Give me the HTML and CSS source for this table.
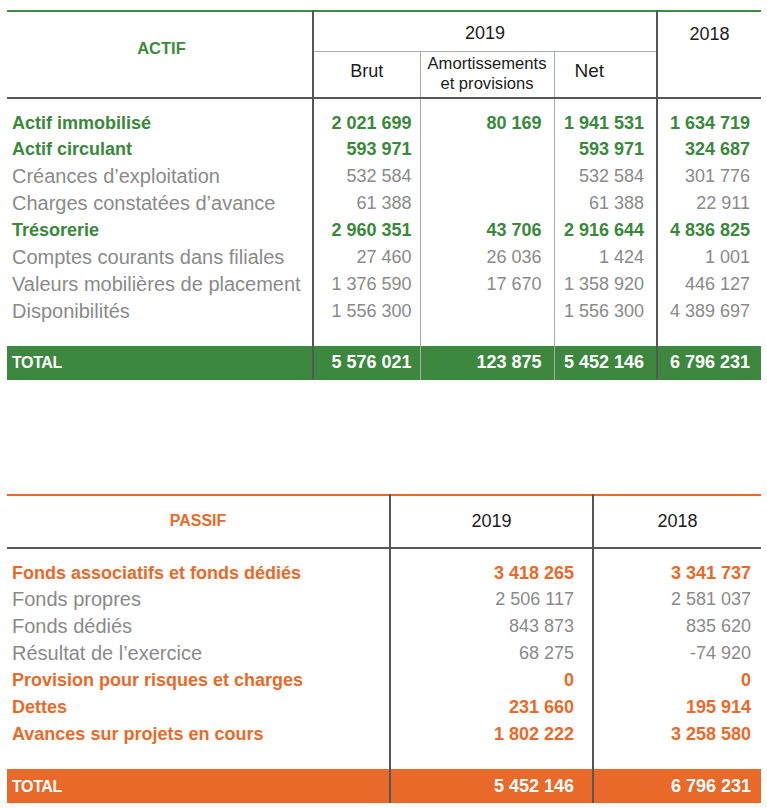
FILE: index.html
```html
<!DOCTYPE html>
<html lang="fr">
<head>
<meta charset="utf-8">
<title>Bilan</title>
<link rel="stylesheet" href="styles.css">
</head>
<body>
<div class="page">
  <table class="bilan actif">
    <colgroup>
      <col class="c-label"><col class="c-brut"><col class="c-amort"><col class="c-net"><col class="c-prev">
    </colgroup>
    <thead>
      <tr class="h1">
        <th rowspan="2" class="title">ACTIF</th>
        <th colspan="3" class="year y2019">2019</th>
        <th rowspan="2" class="year y2018">2018</th>
      </tr>
      <tr class="h2">
        <th class="subh brut">Brut</th>
        <th class="subh amort">Amortissements<br>et provisions</th>
        <th class="subh net">Net</th>
      </tr>
    </thead>
    <tbody>
      <tr class="gap top"><td></td><td></td><td></td><td></td><td></td></tr>
      <tr class="grp"><td>Actif immobilisé</td><td>2 021 699</td><td>80 169</td><td>1 941 531</td><td>1 634 719</td></tr>
      <tr class="grp"><td>Actif circulant</td><td>593 971</td><td></td><td>593 971</td><td>324 687</td></tr>
      <tr class="item"><td>Créances d’exploitation</td><td>532 584</td><td></td><td>532 584</td><td>301 776</td></tr>
      <tr class="item"><td>Charges constatées d’avance</td><td>61 388</td><td></td><td>61 388</td><td>22 911</td></tr>
      <tr class="grp"><td>Trésorerie</td><td>2 960 351</td><td>43 706</td><td>2 916 644</td><td>4 836 825</td></tr>
      <tr class="item"><td>Comptes courants dans filiales</td><td>27 460</td><td>26 036</td><td>1 424</td><td>1 001</td></tr>
      <tr class="item"><td>Valeurs mobilières de placement</td><td>1 376 590</td><td>17 670</td><td>1 358 920</td><td>446 127</td></tr>
      <tr class="item"><td>Disponibilités</td><td>1 556 300</td><td></td><td>1 556 300</td><td>4 389 697</td></tr>
      <tr class="gap bottom"><td></td><td></td><td></td><td></td><td></td></tr>
    </tbody>
    <tfoot>
      <tr class="total"><td>TOTAL</td><td>5 576 021</td><td>123 875</td><td>5 452 146</td><td>6 796 231</td></tr>
    </tfoot>
  </table>

  <table class="bilan passif">
    <colgroup>
      <col class="p-label"><col class="p-cur"><col class="p-prev">
    </colgroup>
    <thead>
      <tr class="ph">
        <th class="title">PASSIF</th>
        <th class="year">2019</th>
        <th class="year">2018</th>
      </tr>
    </thead>
    <tbody>
      <tr class="gap top"><td></td><td></td><td></td></tr>
      <tr class="grp"><td>Fonds associatifs et fonds dédiés</td><td>3 418 265</td><td>3 341 737</td></tr>
      <tr class="item"><td>Fonds propres</td><td>2 506 117</td><td>2 581 037</td></tr>
      <tr class="item"><td>Fonds dédiés</td><td>843 873</td><td>835 620</td></tr>
      <tr class="item"><td>Résultat de l’exercice</td><td>68 275</td><td>-74 920</td></tr>
      <tr class="grp"><td>Provision pour risques et charges</td><td>0</td><td>0</td></tr>
      <tr class="grp"><td>Dettes</td><td>231 660</td><td>195 914</td></tr>
      <tr class="grp"><td>Avances sur projets en cours</td><td>1 802 222</td><td>3 258 580</td></tr>
      <tr class="gap bottom"><td></td><td></td><td></td></tr>
    </tbody>
    <tfoot>
      <tr class="total"><td>TOTAL</td><td>5 452 146</td><td>6 796 231</td></tr>
    </tfoot>
  </table>
</div>
</body>
</html>
```

FILE: styles.css
```css
* { box-sizing: border-box; }

html, body {
  margin: 0;
  padding: 0;
  background: #ffffff;
}

body {
  font-family: "Liberation Sans", Arial, sans-serif;
  color: #1c1c1c;
}

.page {
  padding: 10px 6px 0 7px;
}

.bilan {
  width: 754px;
  border-collapse: collapse;
  table-layout: fixed;
}

.bilan th,
.bilan td {
  padding: 0;
}

/* ---------- ACTIF ---------- */
.actif {
  border-top: 2px solid #3e8a40;
}

.c-label { width: 306px; }
.c-brut  { width: 107px; }
.c-amort { width: 134px; }
.c-net   { width: 103px; }
.c-prev  { width: 104px; }

.actif thead th {
  font-weight: normal;
  vertical-align: top;
  border-bottom: 2px solid #575757;
}

.actif .h1 { height: 40px; }
.actif .h2 { height: 47px; }

.actif .title {
  color: #3e8a40;
  font-weight: bold;
  font-size: 16.5px;
  line-height: 20px;
  padding-top: 26px;
  padding-left: 4px;
  text-align: center;
  border-right: 2px solid #575757;
}

.actif .year {
  font-size: 18px;
  line-height: 22px;
  text-align: center;
}

.actif .y2019 {
  padding-top: 10px;
  border-right: 2px solid #575757;
  border-bottom: 1px solid #ababab;
}

.actif .y2018 {
  padding-top: 11px;
}

.actif .subh {
  font-size: 18px;
  line-height: 20px;
  padding-top: 9px;
  text-align: center;
}

.actif .brut,
.actif .amort {
  border-right: 1px solid #ababab;
}

.actif .amort {
  font-size: 16.6px;
  line-height: 20px;
  padding-top: 2px;
}

.actif .net {
  text-align: left;
  padding-left: 20px;
  font-size: 19px;
  border-right: 2px solid #575757;
}

.actif td:nth-child(1),
.actif td:nth-child(4) {
  border-right: 2px solid #575757;
}

.actif td:nth-child(2),
.actif td:nth-child(3) {
  border-right: 1px solid #ababab;
}

.actif td:nth-child(2) { padding-right: 8px; }
.actif td:nth-child(3) { padding-right: 12px; }
.actif td:nth-child(4) { padding-right: 12px; }
.actif td:nth-child(5) { padding-right: 11px; }

/* ---------- shared body rows ---------- */
.bilan td {
  text-align: right;
  font-size: 18px;
  line-height: 26.85px;
  white-space: nowrap;
}

.bilan td:first-child {
  text-align: left;
  padding-left: 5px;
}

.bilan .item td {
  color: #8a8a8a;
}

.bilan .item td:first-child {
  font-size: 20px;
}

.bilan .grp td {
  font-weight: bold;
}

.actif .grp td { color: #3a883c; }
.passif .grp td { color: #e86a2a; }

.bilan .gap.top td { height: 11.6px; line-height: 0; }
.bilan .gap.bottom td { height: 21.6px; line-height: 0; }

.bilan .total td {
  height: 34px;
  line-height: 33px;
  color: #ffffff;
  font-weight: bold;
  font-size: 18px;
}

.bilan .total td:first-child {
  font-size: 16px;
  letter-spacing: -0.4px;
}

.actif .total td { background: #3e873f; }
.passif .total td { background: #e8692a; }

/* ---------- PASSIF ---------- */
.passif {
  margin-top: 114px;
  border-top: 2px solid #e8692a;
}

.p-label { width: 383px; }
.p-cur   { width: 203px; }
.p-prev  { width: 168px; }

.passif .ph { height: 53px; }

.passif thead th {
  font-weight: normal;
  font-size: 18px;
  text-align: center;
  vertical-align: middle;
  border-bottom: 2px solid #575757;
}

.passif thead th:nth-child(1),
.passif thead th:nth-child(2),
.passif td:nth-child(1),
.passif td:nth-child(2) {
  border-right: 2px solid #575757;
}

.passif .title {
  color: #e86a2a;
  font-weight: bold;
  font-size: 16px;
}

.passif td:nth-child(2) { padding-right: 18px; }
.passif td:nth-child(3) { padding-right: 10px; }
```
